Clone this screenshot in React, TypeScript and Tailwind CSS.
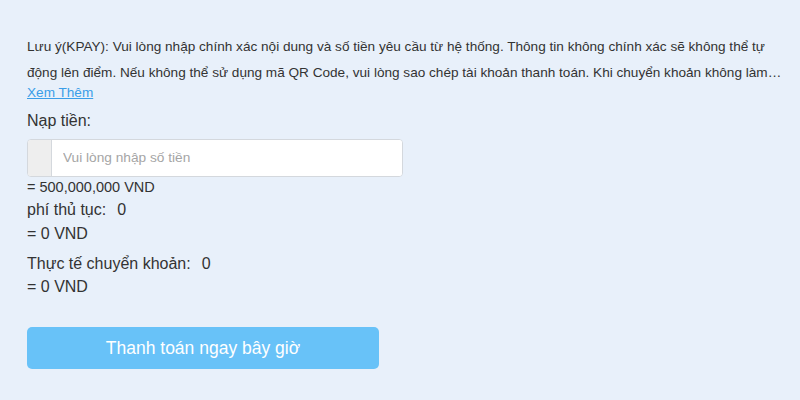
export default function App() {
  return (
    <div className="w-[800px] h-[400px] bg-[#e8f0fa] text-[#333] font-['Liberation_Sans',Arial,sans-serif] pt-[36px] pl-[27px] overflow-hidden">
      <div className="text-[13.6px] leading-[22px] whitespace-nowrap">
        Lưu ý(KPAY): Vui lòng nhập chính xác nội dung và số tiền yêu cầu từ hệ thống. Thông tin không chính xác sẽ không thể tự
      </div>
      <div className="mt-[4px] text-[13.6px] leading-[22px] whitespace-nowrap">
        động lên điểm. Nếu không thể sử dụng mã QR Code, vui lòng sao chép tài khoản thanh toán. Khi chuyển khoản không làm…
      </div>
      <a className="block w-fit text-[13.6px] leading-[18px] text-[#3a9ee8] underline">Xem Thêm</a>

      <div className="mt-[8px] text-[16px] leading-[22px]">Nạp tiền:</div>

      <div className="mt-[7px] flex w-[376px] h-[38px] rounded border border-[#d4d8dd] bg-white overflow-hidden">
        <span className="w-[24px] bg-[#eeeeee] border-r border-[#d4d8dd]" />
        <input
          className="flex-1 px-[11px] text-[13.7px] text-[#333] placeholder:text-[#a5a5a5] outline-none bg-white"
          placeholder="Vui lòng nhập số tiền"
        />
      </div>

      <div className="mt-[1px] text-[14.5px] leading-[18px]">= 500,000,000 VND</div>
      <div className="mt-[2px] text-[16px] leading-[24px]">
        phí thủ tục:<span className="ml-[11px]">0</span>
      </div>
      <div className="text-[16px] leading-[24px]">= 0 VND</div>
      <div className="mt-[6px] text-[16px] leading-[23px]">
        Thực tế chuyển khoản:<span className="ml-[11px]">0</span>
      </div>
      <div className="text-[16px] leading-[24px]">= 0 VND</div>

      <button className="mt-[28px] w-[352px] h-[42px] rounded-[5px] bg-[#68c2f8] text-white text-[17.5px]">
        Thanh toán ngay bây giờ
      </button>
    </div>
  );
}
